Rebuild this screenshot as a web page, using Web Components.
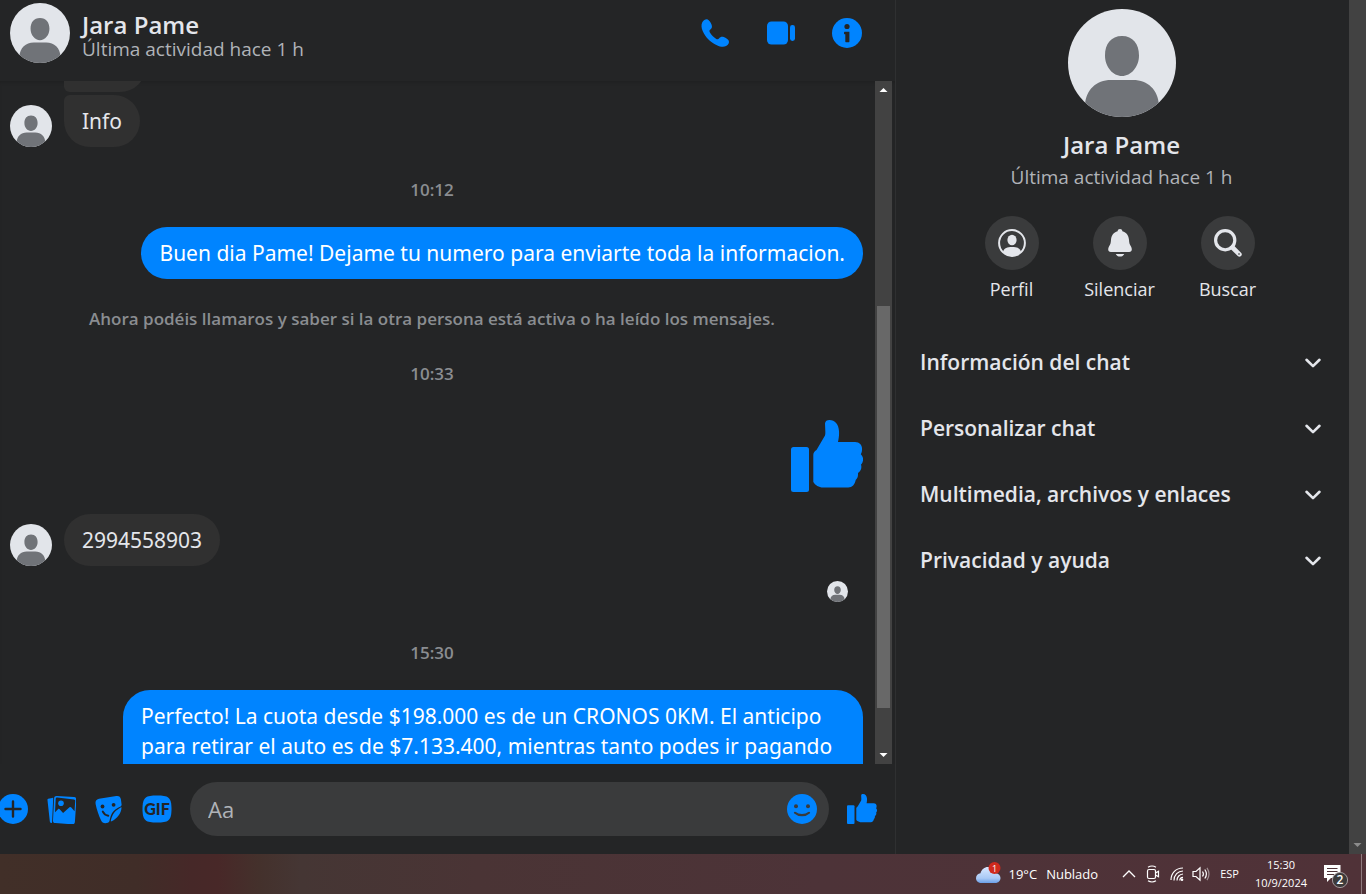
<!DOCTYPE html>
<html lang="es">
<head>
<meta charset="utf-8">
<meta name="viewport" content="width=device-width, initial-scale=1">
<title>Jara Pame | Messenger</title>
<style>
    :root {
        --bg: #242526;
        --blue: #0084ff;
        --text: #e4e6eb;
        --muted: #b0b3b8;
        --faint: #8a8d91;
        --surface: #3a3b3c;
        --track: #424242;
    }
    body {
        margin: 0;
        height: 100vh;
        display: flex;
        flex-direction: column;
        overflow: hidden;
        background: var(--bg);
        color: var(--text);
        font-family: "Open Sans", "Noto Sans", sans-serif;
    }
    main {
        flex: 1;
        min-height: 0;
        display: flex;
    }
</style>
</head>
<body>
<main>
    <chat-window>
        <chat-header slot="header" name="Jara Pame" status="Última actividad hace 1 h"></chat-header>

        <chat-message position="first"></chat-message>
        <chat-message avatar position="last">Info</chat-message>
        <chat-stamp>10:12</chat-stamp>
        <chat-message own>Buen dia Pame! Dejame tu numero para enviarte toda la informacion.</chat-message>
        <chat-stamp notice>Ahora podéis llamaros y saber si la otra persona está activa o ha leído los mensajes.</chat-stamp>
        <chat-stamp>10:33</chat-stamp>
        <chat-like></chat-like>
        <chat-message avatar>2994558903</chat-message>
        <chat-seen></chat-seen>
        <chat-stamp>15:30</chat-stamp>
        <chat-message own continued>Perfecto! La cuota desde $198.000 es de un CRONOS 0KM. El anticipo para retirar el auto es de $7.133.400, mientras tanto podes ir pagando</chat-message>

        <chat-composer slot="composer"></chat-composer>
    </chat-window>

    <chat-info name="Jara Pame" status="Última actividad hace 1 h">
        <info-action slot="actions" icon="profile">Perfil</info-action>
        <info-action slot="actions" icon="bell">Silenciar</info-action>
        <info-action slot="actions" icon="search">Buscar</info-action>
        <info-section>Información del chat</info-section>
        <info-section>Personalizar chat</info-section>
        <info-section>Multimedia, archivos y enlaces</info-section>
        <info-section>Privacidad y ayuda</info-section>
    </chat-info>
    <scroll-bar idle></scroll-bar>
</main>
<task-bar></task-bar>

<script>
const ICONS = {
    phone: `<svg viewBox="0 0 30 30" width="30" height="30"><path fill="currentColor" d="M2.3 4.2C3.6 2 6 .9 7.6 1.500c1.500.6 3.200 3 4 5.200.8 2.100.2 3.500-1 4.500-1.200.9-1.500 1.700-.8 3 1.500 2.800 3.800 5.100 6.500 6.700 1.200.7 2 .4 2.900-.7 1.200-1.400 2.600-1.900 4.600-1.200 2.200.8 4.400 2.400 5 3.700.7 1.800-.5 4.200-2.700 5.400-2.500 1.300-5.700.9-9.200-.8C10 23.900 5.400 19 2.900 13.500 1.300 9.900 1 6.600 2.300 4.200z"/></svg>`,
    video: `<svg viewBox="0 0 30 30" width="30" height="30"><g fill="currentColor"><rect x="1" y="3.500" width="21" height="23" rx="4.500"/><rect x="24" y="7" width="5" height="16" rx="2.400"/></g></svg>`,
    info: `<svg viewBox="0 0 30 30" width="30" height="30"><circle cx="15" cy="15" r="15" fill="currentColor"/><circle cx="15" cy="8.500" r="2.600" fill="#242526"/><path fill="#242526" d="M12.500 13.800h4.900v9.800q0 .6-.6.6h-2.900q-.6 0-.6-.6v-7.400h-.8q-.5 0-.5-.6v-1.200z"/></svg>`,
    plus: `<svg viewBox="0 0 30 30" width="30" height="30"><circle cx="15" cy="15" r="15" fill="currentColor"/><path d="M15 7.500v15M7.500 15h15" stroke="#242526" stroke-width="2.400" stroke-linecap="round"/></svg>`,
    photo: `<svg viewBox="-1 0 30 30" width="30" height="30"><path fill="currentColor" d="M1.200 4.800l4-.9c.8-.2 1.100.2 1 .9L5.100 28c0 .9-.3 1.300-1 1-.9-.3-1.200-.9-1.300-1.800L.5 6.200c-.1-.8.1-1.200.7-1.400z"/><path fill="currentColor" fill-rule="evenodd" d="M9.800 2l17.200 1.100c1.700.1 2.500 1.200 2.400 2.800l-1.500 22c-.1 1.700-1.100 2.500-2.700 2.400L8.300 29.100c-1.700-.1-2.400-1.100-2.300-2.700L7.100 4.300C7.200 2.700 8.200 1.900 9.800 2zm.5 1.600c-1 0-1.500.5-1.600 1.400l-.7 13.300 3-3.100c.7-.6 1.300-.5 1.900.2l3.200 3.700 6.400-5.800c.6-.6 1.300-.5 1.800.1l3.200 3.900.7-10.400c.1-.8-.4-1.300-1.200-1.400z"/><circle cx="14" cy="9.200" r="2.800" fill="currentColor"/></svg>`,
    sticker: `<svg viewBox="0 0 30 30" width="30" height="30"><path fill="currentColor" d="M5 4.800L22.300 2c2.600-.4 4.200.8 4.600 3.300l.7 5.300c.1.900-.2 1.400-1 1.800-3.600 1.600-6.500 3.300-8.500 6.700-1.300 2.200-1.800 4.600-2.600 7.800-.2.900-.7 1.500-1.600 1.800-3.200 1.100-5.700.4-7-2.700C4.900 21.800 2.500 15 1.600 10 1.100 7.200 2.300 5.300 5 4.800z"/><path fill="currentColor" d="M27.500 13.800c-.2 5.400-4.300 11-9.900 13.500-.7.300-1 .1-.8-.6 1.300-6.300 4.300-10.200 9.900-13.200.5-.3.800-.2.800.3z"/><circle cx="8.500" cy="12.500" r="1.900" fill="#242526"/><circle cx="19.600" cy="10.800" r="1.900" fill="#242526"/><path d="M8.800 17.600c1.200 2.400 3 3.700 5.400 4.100" fill="none" stroke="#242526" stroke-width="2" stroke-linecap="round"/></svg>`,
    gif: `<svg viewBox="0 0 30 30" width="30" height="30"><path fill="currentColor" d="M15 1.500c11 0 14.500 1.500 14.500 13.500S26 28.500 15 28.500.5 27 .5 15 4 1.500 15 1.500z"/><text x="15" y="21" text-anchor="middle" font-family="Lato, sans-serif" font-weight="900" font-size="16" fill="#242526">GIF</text></svg>`,
    smile: `<svg viewBox="0 0 30 30" width="30" height="30"><circle cx="15" cy="15" r="15" fill="currentColor"/><circle cx="9" cy="12.200" r="2" fill="#3a3b3c"/><circle cx="21" cy="12.200" r="2" fill="#3a3b3c"/><path d="M8 18.800c3.500 3.200 10.500 3.200 14 0" fill="none" stroke="#3a3b3c" stroke-width="2.200" stroke-linecap="round"/></svg>`,
    like: `<svg viewBox="0 0 72 72" width="100%" height="100%"><g fill="currentColor"><rect x="0" y="27" width="18" height="45" rx="2.500"/><path d="M34 3.500C34.200 1 36 0 38.500 0c5.500 0 9 4 9.500 11 .3 4-.3 7.500-1 11h17c5 0 7.500 3.500 7 8 0 1.500-.5 3-1.200 4.200 3 2.800 3 7.300.2 10.300 1 3.500 0 6.500-3 8.500.2 3.500-.5 5.500-2.300 7-.8 4.500-3.500 7.500-7.500 7.500H32c-4 0-8-2.500-9.700-5.500V35c0-2.500 1-3.500 3.200-5L34 15.500c.8-3 0-8 0-12z"/></g></svg>`,
    profile: `<svg viewBox="0 0 28 28" width="28" height="28"><circle cx="14" cy="14" r="12.900" fill="none" stroke="currentColor" stroke-width="2"/><ellipse cx="14" cy="11" rx="4.600" ry="5.200" fill="currentColor"/><path fill="currentColor" d="M5 22.500c1.500-3.700 4-4.600 9-4.600s7.500.9 9 4.600c-2 3.200-5.300 4.700-9 4.700s-7-1.500-9-4.700z"/></svg>`,
    bell: `<svg viewBox="0 0 28 28" width="28" height="28"><path fill="currentColor" d="M14 0c1.400 0 2.200.9 2.400 2.200 4 1 6.300 4.300 6.600 8.500.2 3.400.7 4.800 2 6.800.6 1 .8 2 .8 3 0 1.600-1 2.500-2.600 2.500H4.800c-1.600 0-2.600-.9-2.600-2.500 0-1 .2-2 .8-3 1.300-2 1.800-3.400 2-6.800.3-4.200 2.600-7.500 6.600-8.500C11.800.9 12.600 0 14 0z"/><path fill="currentColor" d="M9.800 25h8.400c-.7 1.700-2.200 2.600-4.200 2.600S10.500 26.700 9.800 25z"/></svg>`,
    search: `<svg viewBox="0 0 28 28" width="28" height="28"><circle cx="11.200" cy="11.200" r="9.600" fill="none" stroke="currentColor" stroke-width="3.200"/><path d="M18.500 18.500l6.900 6.900" stroke="currentColor" stroke-width="4.600" stroke-linecap="round"/><circle cx="25" cy="25" r="1" fill="#77787b"/></svg>`,
    chevron: `<svg viewBox="0 0 18 18" width="18" height="18"><path d="M2.500 6.800L9 13.100l6.500-6.300" fill="none" stroke="currentColor" stroke-width="2.600" stroke-linecap="round" stroke-linejoin="round"/></svg>`
};

const BUTTON = `
    button {
        padding: 0;
        border: 0;
        background: none;
        color: inherit;
        font: inherit;
        cursor: pointer;
    }
    svg {
        display: block;
    }
`;

function attach(el, html) {
    const template = document.createElement("template");
    template.innerHTML = html;
    el.attachShadow({ mode: "open" }).append(template.content.cloneNode(true));
}

class UserAvatar extends HTMLElement {
    constructor() {
        super();
        attach(this, `
            <style>
                :host {
                    display: block;
                    flex: none;
                    border-radius: 50%;
                    overflow: hidden;
                    background: #e2e5ea;
                    width: var(--size, 42px);
                    height: var(--size, 42px);
                }
                svg { display: block; }
            </style>
            <svg viewBox="0 0 108 108" width="100%" height="100%" role="img" aria-label="Foto del perfil">
                <path fill="#707378" d="M54 27c11 0 17 8 17 19.500C71 58 63 67 54 67s-17-9-17-20.500C37 35 43 27 54 27zM17 96C18 81 28 71 43 71h22c15 0 25 10 26 25v12H17z"/>
            </svg>
        `);
    }
}

class ScrollBar extends HTMLElement {
    constructor() {
        super();
        attach(this, `
            <style>
                :host {
                    display: grid;
                    grid-template-rows: 17px 1fr 17px;
                    flex: none;
                    width: 17px;
                    background: var(--track);
                    color: #fff;
                }
                :host([idle]) { color: #8c8c8c; }
                :host([idle]) .thumb,
                :host([idle]) .up { visibility: hidden; }
                .track {
                    display: grid;
                    grid-template-rows: 32fr 62fr 6fr;
                    padding: 0 2px;
                }
                .thumb {
                    grid-row: 2;
                    background: #686868;
                }
                svg { display: block; }
            </style>
            <svg class="up" viewBox="0 0 17 17"><path fill="currentColor" d="M8.500 7l4 4h-8z"/></svg>
            <div class="track"><div class="thumb"></div></div>
            <svg viewBox="0 0 17 17"><path fill="currentColor" d="M8.500 10l4-4h-8z"/></svg>
        `);
    }
}

class ChatWindow extends HTMLElement {
    constructor() {
        super();
        attach(this, `
            <style>
                :host {
                    flex: 1;
                    min-width: 0;
                    display: flex;
                    flex-direction: column;
                }
                .body {
                    flex: 1;
                    min-height: 0;
                    display: flex;
                    padding-right: 3px;
                    box-shadow: inset 0 3px 3px -1px rgba(0, 0, 0, .12);
                }
                .view {
                    flex: 1;
                    min-width: 0;
                    overflow: hidden;
                }
                /* history is scrolled past the top of the first bubble */
                .list {
                    display: flex;
                    flex-direction: column;
                    margin-top: -41px;
                    padding: 0 12px 0 10px;
                }
            </style>
            <slot name="header"></slot>
            <div class="body">
                <div class="view"><div class="list"><slot></slot></div></div>
                <scroll-bar></scroll-bar>
            </div>
            <slot name="composer"></slot>
        `);
    }
}

class ChatHeader extends HTMLElement {
    constructor() {
        super();
        attach(this, `
            <style>
                ${BUTTON}
                :host {
                    display: flex;
                    align-items: center;
                    gap: 12px;
                    padding: 3px 21px 18px 10px;
                }
                user-avatar { --size: 60px; }
                .who {
                    flex: 1;
                    min-width: 0;
                    padding-top: 6px;
                }
                h1 {
                    margin: 0;
                    font-size: 24px;
                    font-weight: 600;
                    line-height: 26px;
                }
                p {
                    margin: 0;
                    font-size: 19px;
                    line-height: 22px;
                    color: var(--muted);
                }
                nav {
                    display: flex;
                    gap: 12px;
                    color: var(--blue);
                }
                nav button {
                    width: 54px;
                    height: 54px;
                    display: grid;
                    place-items: center;
                }
            </style>
            <user-avatar></user-avatar>
            <div class="who"><h1></h1><p></p></div>
            <nav>
                <button aria-label="Llamar">${ICONS.phone}</button>
                <button aria-label="Videollamada">${ICONS.video}</button>
                <button aria-label="Información">${ICONS.info}</button>
            </nav>
        `);
    }

    connectedCallback() {
        this.shadowRoot.querySelector("h1").textContent = this.getAttribute("name");
        this.shadowRoot.querySelector("p").textContent = this.getAttribute("status");
    }
}

class ChatMessage extends HTMLElement {
    constructor() {
        super();
        attach(this, `
            <style>
                :host {
                    display: flex;
                    align-items: flex-end;
                    gap: 12px;
                }
                .side {
                    width: 42px;
                    flex: none;
                }
                user-avatar { visibility: hidden; }
                :host([avatar]) user-avatar { visibility: visible; }
                .bubble {
                    box-sizing: border-box;
                    min-height: 52px;
                    max-width: 740px;
                    padding: 11px 18px;
                    border-radius: 27px;
                    background: #303030;
                    font-family: "Noto Sans", "Open Sans", sans-serif;
                    font-size: 21px;
                    line-height: 30px;
                }
                :host([position="first"]) .bubble {
                    min-width: 82px;
                    border-bottom-left-radius: 6px;
                }
                :host([position="last"]) { margin-top: 3px; }
                :host([position="last"]) .bubble { border-top-left-radius: 6px; }
                :host([own]) { justify-content: flex-end; }
                :host([own]) .side { display: none; }
                :host([own]) .bubble {
                    background: var(--blue);
                    color: #fff;
                }
                /* long message that runs on below the fold */
                :host([continued]) .bubble { padding-bottom: 41px; }
            </style>
            <div class="side"><user-avatar></user-avatar></div>
            <div class="bubble"><slot></slot></div>
        `);
    }
}

class ChatStamp extends HTMLElement {
    constructor() {
        super();
        attach(this, `
            <style>
                :host {
                    display: block;
                    padding: 31px 9px 25px 0;
                    text-align: center;
                    font-size: 17px;
                    font-weight: 600;
                    line-height: 24px;
                    color: var(--faint);
                }
                :host([notice]) { padding: 28px 9px 0 0; }
            </style>
            <slot></slot>
        `);
    }
}

class ChatLike extends HTMLElement {
    constructor() {
        super();
        attach(this, `
            <style>
                :host {
                    display: flex;
                    justify-content: flex-end;
                    padding: 9px 0 22px;
                    color: var(--blue);
                }
                div { width: 72px; height: 72px; }
                svg { display: block; }
            </style>
            <div>${ICONS.like}</div>
        `);
    }
}

class ChatSeen extends HTMLElement {
    constructor() {
        super();
        attach(this, `
            <style>
                :host {
                    display: flex;
                    justify-content: flex-end;
                    padding: 15px 15px 8px;
                }
                user-avatar { --size: 21px; }
            </style>
            <user-avatar></user-avatar>
        `);
    }
}

class ChatComposer extends HTMLElement {
    constructor() {
        super();
        attach(this, `
            <style>
                ${BUTTON}
                :host {
                    display: flex;
                    align-items: center;
                    gap: 18px;
                    padding: 18px 18px 18px 0;
                    color: var(--blue);
                }
                button {
                    flex: none;
                    width: 30px;
                    height: 30px;
                }
                .tools {
                    display: flex;
                    gap: 18px;
                    margin-left: -2px;
                }
                .field {
                    flex: 1;
                    min-width: 0;
                    display: flex;
                    align-items: center;
                    gap: 12px;
                    height: 54px;
                    padding: 0 12px 0 18px;
                    box-sizing: border-box;
                    border-radius: 27px;
                    background: var(--surface);
                }
                input {
                    flex: 1;
                    min-width: 0;
                    padding: 0;
                    border: 0;
                    outline: 0;
                    background: none;
                    color: var(--text);
                    font: inherit;
                    font-size: 22px;
                    line-height: 30px;
                }
                input::placeholder { color: var(--muted); opacity: 1; }
            </style>
            <div class="tools">
                <button aria-label="Más acciones">${ICONS.plus}</button>
                <button aria-label="Adjuntar archivo">${ICONS.photo}</button>
                <button aria-label="Elegir sticker">${ICONS.sticker}</button>
                <button>${ICONS.gif}</button>
            </div>
            <div class="field">
                <input type="text" placeholder="Aa" aria-label="Mensaje">
                <button aria-label="Elegir emoji">${ICONS.smile}</button>
            </div>
            <button aria-label="Enviar me gusta">${ICONS.like}</button>
        `);
    }
}

class ChatInfo extends HTMLElement {
    constructor() {
        super();
        attach(this, `
            <style>
                :host {
                    display: flex;
                    flex-direction: column;
                    flex: none;
                    box-sizing: border-box;
                    width: 454px;
                    padding: 9px 2px 0 0;
                    border-left: 1px solid #2f3031;
                }
                user-avatar {
                    --size: 108px;
                    align-self: center;
                }
                h2 {
                    margin: 12px 0 0;
                    text-align: center;
                    font-size: 24px;
                    font-weight: 600;
                    line-height: 32px;
                }
                p {
                    margin: 4px 0 0;
                    text-align: center;
                    font-size: 19px;
                    line-height: 24px;
                    color: var(--muted);
                }
                .actions {
                    display: flex;
                    justify-content: center;
                    gap: 24px;
                    padding: 27px 4px 28px 0;
                }
            </style>
            <user-avatar></user-avatar>
            <h2></h2>
            <p></p>
            <div class="actions"><slot name="actions"></slot></div>
            <slot></slot>
        `);
    }

    connectedCallback() {
        this.shadowRoot.querySelector("h2").textContent = this.getAttribute("name");
        this.shadowRoot.querySelector("p").textContent = this.getAttribute("status");
    }
}

class InfoAction extends HTMLElement {
    constructor() {
        super();
        attach(this, `
            <style>
                ${BUTTON}
                :host { display: block; width: 84px; }
                button {
                    display: flex;
                    flex-direction: column;
                    align-items: center;
                    gap: 7px;
                    width: 100%;
                    font-size: 18px;
                    line-height: 24px;
                }
                .icon {
                    width: 54px;
                    height: 54px;
                    display: grid;
                    place-items: center;
                    border-radius: 50%;
                    background: var(--surface);
                }
            </style>
            <button><span class="icon"></span><slot></slot></button>
        `);
    }

    connectedCallback() {
        this.shadowRoot.querySelector(".icon").innerHTML = ICONS[this.getAttribute("icon")];
    }
}

class InfoSection extends HTMLElement {
    constructor() {
        super();
        attach(this, `
            <style>
                ${BUTTON}
                :host { display: block; }
                button {
                    display: flex;
                    align-items: center;
                    justify-content: space-between;
                    width: 100%;
                    height: 66px;
                    padding: 0 25px 0 24px;
                    text-align: left;
                    font-size: 21px;
                    font-weight: 600;
                    line-height: 30px;
                }
            </style>
            <button aria-expanded="false"><span><slot></slot></span>${ICONS.chevron}</button>
        `);
    }
}

class TaskBar extends HTMLElement {
    constructor() {
        super();
        attach(this, `
            <style>
                ${BUTTON}
                :host {
                    flex: none;
                    display: flex;
                    align-items: center;
                    justify-content: flex-end;
                    height: 40px;
                    color: #fff;
                    font-size: 11px;
                    line-height: 18px;
                    background: linear-gradient(90deg, #412f28 0, #402d28 10%, #462828 14%, #482828 16%, #44312c 19%, #453634 22%, #4a3435 35%, #4d3338 60%, #503238 100%);
                }
                .weather {
                    display: flex;
                    align-items: center;
                    gap: 8px;
                    margin-right: 24px;
                    font-size: 13px;
                }
                .weather span + span { margin-left: 1px; }
                .tray {
                    display: flex;
                    align-items: center;
                    gap: 8px;
                    margin-right: 10px;
                }
                .clock {
                    text-align: center;
                    margin: 0 17px 0 16px;
                }
                .clock span { display: block; }
                .show {
                    align-self: stretch;
                    width: 5px;
                    margin-left: 12px;
                    border-left: 1px solid #8f7a7e;
                }
            </style>
            <button class="weather">
                <svg width="25" height="26" viewBox="0 0 25 26">
                    <defs><linearGradient id="sky" x2="0" y2="1"><stop stop-color="#d9e8ff"/><stop offset=".7" stop-color="#a9c9f5"/><stop offset="1" stop-color="#6a9fe8"/></linearGradient></defs>
                    <path fill="url(#sky)" d="M5.500 22C2.500 22 0 20 0 17.200c0-2.800 2-4.800 4.500-5C5.500 8.500 8.500 6 12 6c4 0 7 2.600 7.800 6.200 2.700.1 4.700 2.200 4.700 4.800 0 2.800-2.200 5-5.200 5z"/>
                    <circle cx="18.500" cy="7" r="6" fill="#cf2a1e"/>
                    <text x="18.500" y="10.500" text-anchor="middle" font-size="9" fill="#fff">1</text>
                </svg>
                <span>19°C</span><span>Nublado</span>
            </button>
            <div class="tray">
                <button aria-label="Mostrar iconos ocultos"><svg width="14" height="18" viewBox="0 0 14 18" fill="none" stroke="#fff" stroke-width="1.300"><path d="M1 12l6-6 6 6"/></svg></button>
                <svg width="18" height="20" viewBox="0 0 18 20" fill="none" stroke="#fff" stroke-width="1.200"><rect x="3.500" y="5.500" width="8" height="9" rx="1.500"/><path d="M11.500 9l3-1.800v5.600l-3-1.800M4 3.200q4-2.400 8 0M4 16.800q4 2.400 8 0"/></svg>
                <svg width="14" height="18" viewBox="0 0 14 18" fill="none" stroke="#fff" stroke-width="1.200"><path d="M1 15C1 8 6 3 13 3M4 15.500C4 10 8 6 13 6M7 15.500C7 12 9.500 9.200 13 9M9.800 15.500c0-2 1.200-3.200 3.200-3.200"/><circle cx="12" cy="14.800" r="1.300" fill="#fff" stroke="none"/></svg>
                <svg width="18" height="18" viewBox="0 0 18 18" fill="none" stroke="#fff" stroke-width="1.200"><path d="M1 6.500h3l4-3.700v12.400L4 11.500H1zM10.500 6.500q1.800 2.500 0 5M12.800 4.500q3.200 4.500 0 9"/><path d="M15 2.800q4 6.200 0 12.400" opacity=".45"/></svg>
            </div>
            <span>ESP</span>
            <div class="clock"><span>15:30</span><span>10/9/2024</span></div>
            <button aria-label="Notificaciones">
                <svg width="25" height="28" viewBox="0 0 25 28">
                    <path fill="#fff" d="M0 5h16.500v13H7l-4 4v-4H0z"/>
                    <path d="M3 8.500h10.500M3 11.500h10.500M3 14.500h7" stroke="#4e3338" stroke-width="1.200"/>
                    <circle cx="16" cy="20" r="7.600" fill="#3c3a3b" stroke="#a49a9c"/>
                    <text x="16" y="24.200" text-anchor="middle" font-size="12" font-weight="600" fill="#fff">2</text>
                </svg>
            </button>
            <button class="show" aria-label="Mostrar escritorio"></button>
        `);
    }
}

customElements.define("user-avatar", UserAvatar);
customElements.define("scroll-bar", ScrollBar);
customElements.define("chat-window", ChatWindow);
customElements.define("chat-header", ChatHeader);
customElements.define("chat-message", ChatMessage);
customElements.define("chat-stamp", ChatStamp);
customElements.define("chat-like", ChatLike);
customElements.define("chat-seen", ChatSeen);
customElements.define("chat-composer", ChatComposer);
customElements.define("chat-info", ChatInfo);
customElements.define("info-action", InfoAction);
customElements.define("info-section", InfoSection);
customElements.define("task-bar", TaskBar);
</script>
</body>
</html>
